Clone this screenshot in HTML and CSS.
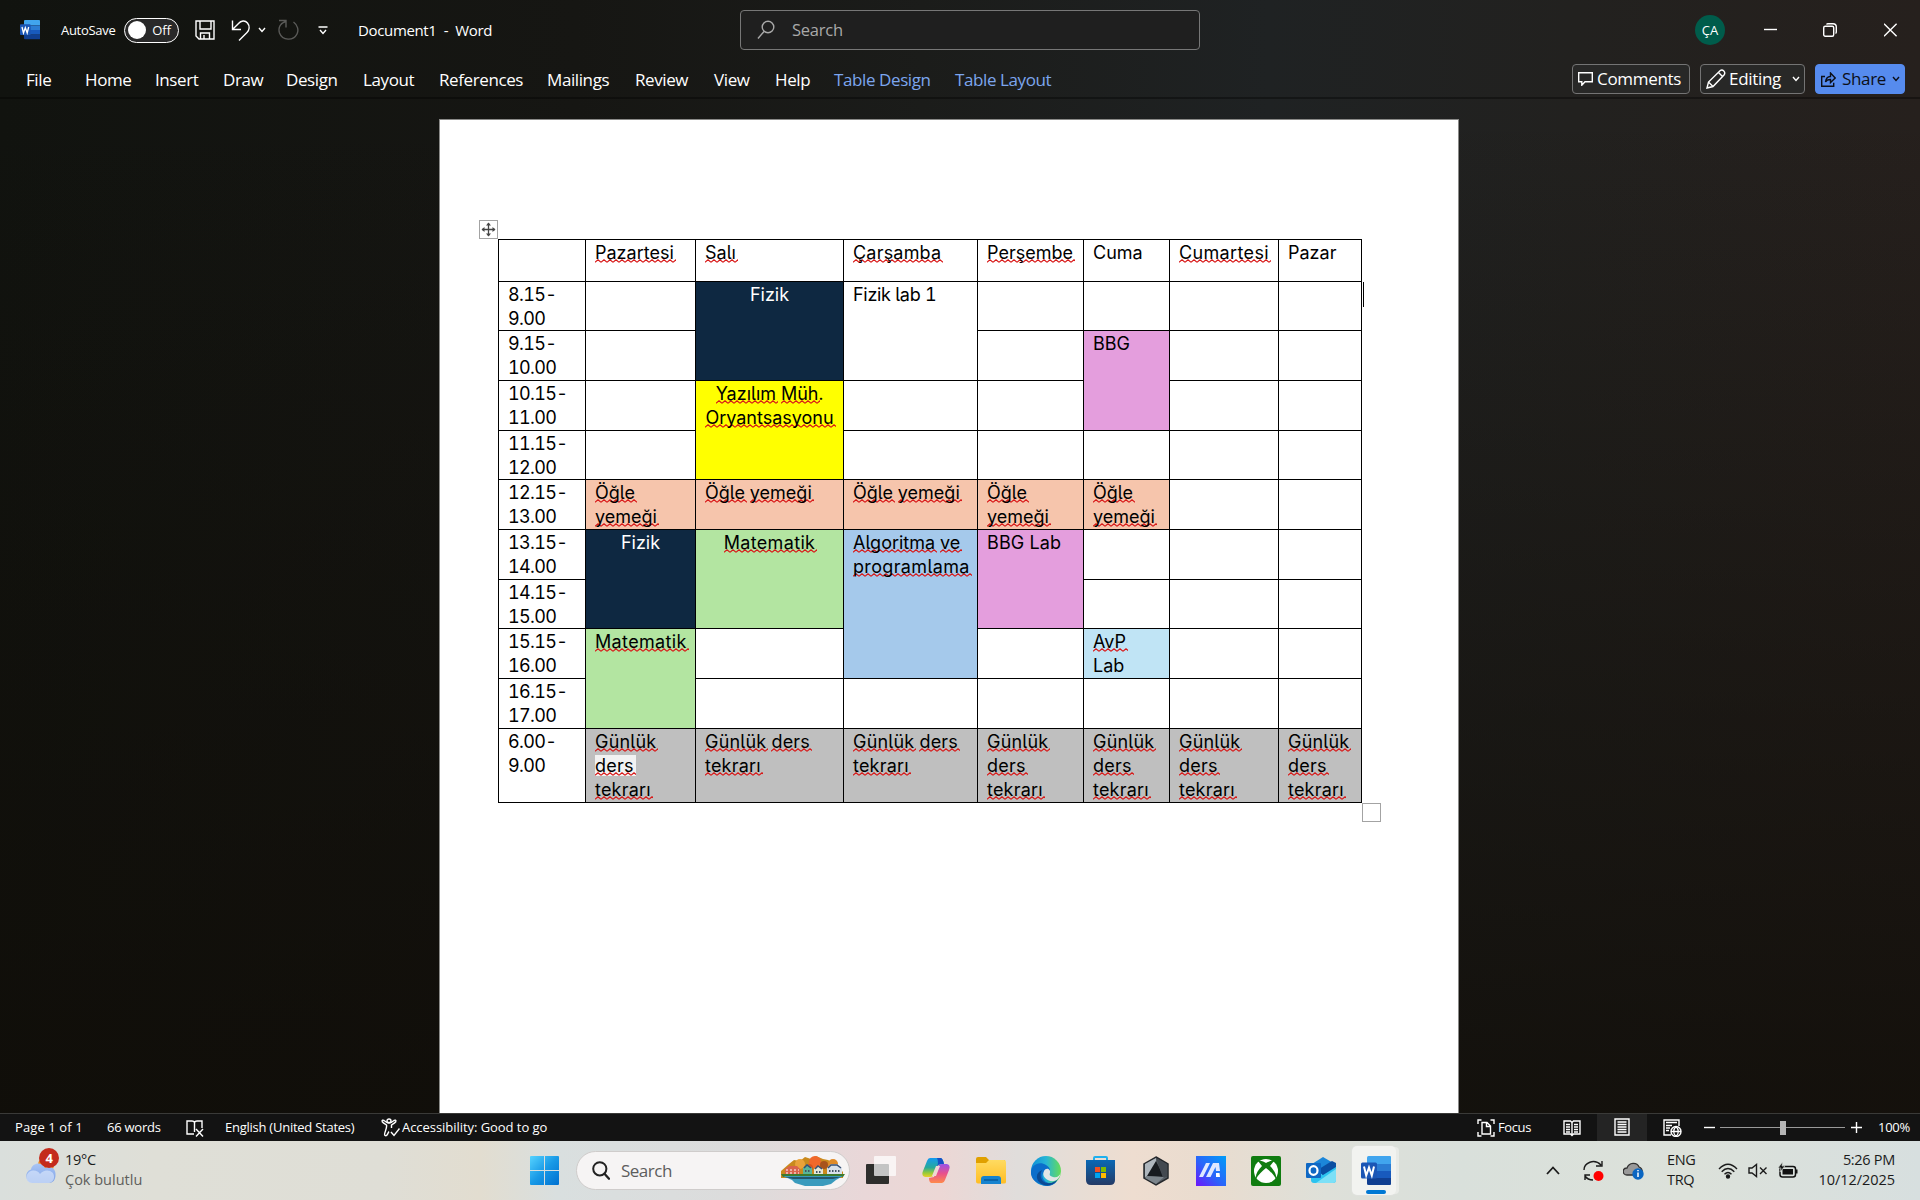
FILE: index.html
```html
<!DOCTYPE html>
<html lang="en">
<head>
<meta charset="utf-8">
<title>Document1 - Word</title>
<link rel="stylesheet" href="styles.css">
</head>
<body>
<div class="window">
  <header class="ribbon">
    <div class="titlebar">
      <svg width="20" height="20" viewBox="0 0 30 30"><use href="#word"/></svg>
      <span class="autosave">AutoSave</span>
      <span class="toggle"><i></i>Off</span>
      <svg width="20" height="20" viewBox="0 0 20 20" class="line"><path d="M1 1h18v18H4l-3-3zM5 1v8h11V1M5.500 19v-6h9v6M9 15v4"/></svg>
      <svg width="20" height="22" viewBox="0 0 20 22" class="line"><path d="M1.500 1.500v9H10M2 10L7.500 4.500C10 1.500 14 1 16.500 4c2.500 3 2 7-.5 9.500L8 21.500"/></svg>
      <svg width="8" height="6" viewBox="0 0 8 6" class="line"><path d="M1 1l3 3.500L7 1"/></svg>
      <svg width="22" height="22" viewBox="0 0 22 22" class="line dim"><path d="M1 1.500h7v7M7.500 2.500C2 4.500 0 9 1.500 14c3 8 14 8 17.500 1 2-4 .5-9-3.500-12"/></svg>
      <svg width="10" height="9" viewBox="0 0 10 9" class="line"><path d="M.5 1h9M2 4l3 3.500L8 4"/></svg>
      <span class="doc-name">Document1&nbsp; -&nbsp; Word</span>
      <div class="search"><svg width="18" height="20" viewBox="0 0 18 20" class="line"><circle cx="11" cy="7" r="5.800"/><path d="M7 11.500L1 18.500"/></svg><span>Search</span></div>
      <span class="avatar">ÇA</span>
      <svg width="14" height="14" viewBox="0 0 14 14" class="line"><path d="M0 6.500h13"/></svg>
      <svg width="14" height="14" viewBox="0 0 14 14" class="line"><rect x=".7" y="3.200" width="10" height="10" rx="1.500"/><path d="M3.500 1.500Q4 .7 5 .7h5q3.300 0 3.300 3.300v5q0 1-.8 1.500"/></svg>
      <svg width="14" height="14" viewBox="0 0 14 14" class="line"><path d="M0 .7l12.600 12.600M12.600.7L0 13.300"/></svg>
    </div>
    <div class="tabrow">
      <nav class="tabs">
        <span>File</span><span>Home</span><span>Insert</span><span>Draw</span><span>Design</span><span>Layout</span><span>References</span><span>Mailings</span><span>Review</span><span>View</span><span>Help</span><span class="ctx">Table Design</span><span class="ctx">Table Layout</span>
      </nav>
      <div class="actions">
        <button class="btn comments"><svg width="15" height="14" viewBox="0 0 15 14" class="line"><path d="M.7.7h13.600v9H7l-3.200 3.500V9.700H.7z"/></svg><span>Comments</span></button>
        <button class="btn editing"><svg width="20" height="20" viewBox="0 0 20 20" class="line"><path d="M1 19l1.500-6L14 1.700q2-1.400 3.800.3T18 6L7 17.500zM12.500 3.500l4 4M2.500 13l4.500 4.500"/></svg><span>Editing</span><svg width="8" height="6" viewBox="0 0 8 6" class="line"><path d="M1 1l3 3.500L7 1"/></svg></button>
        <button class="btn share"><svg width="15" height="15" viewBox="0 0 15 15" class="line"><path d="M4 4.500H.7v9.800h12v-3.500M4.500 10c.5-4 2.500-5.500 5-5.500V1l4.700 5-4.700 4.500V7.500C7 7.500 5.500 8 4.500 10z"/></svg><span>Share</span><svg width="8" height="6" viewBox="0 0 8 6" class="line"><path d="M1 1l3 3.500L7 1"/></svg></button>
      </div>
    </div>
  </header>

  <main class="canvas">
    <article class="page">
      <div class="table-wrap">
        <span class="move-handle"><svg width="15" height="15" viewBox="0 0 15 15"><path d="M7.500 1v13M1 7.500h13" stroke="#444" stroke-width="1.300"/><path d="M5 3.500L7.500.5 10 3.500zM5 11.500l2.500 3 2.500-3zM3.500 5l-3 2.500 3 2.500zM11.500 5l3 2.500-3 2.500z" fill="#444"/></svg></span>
        <span class="caret"></span>
        <span class="size-handle"></span>
        <table class="plan">
          <colgroup><col class="c1"><col class="c2"><col class="c3"><col class="c4"><col class="c5"><col class="c6"><col class="c7"><col class="c8"></colgroup>
          <tr class="h42"><td></td><td><u>Pazartesi</u></td><td><u>Salı</u></td><td><u class="roomy">Çarşamba</u></td><td><u>Perşembe</u></td><td>Cuma</td><td><u class="wide">Cumartesi</u></td><td>Pazar</td></tr>
          <tr class="h49"><td>8.15-<br>9.00</td><td></td><td rowspan="2" class="navy">Fizik</td><td rowspan="2" class="lab">Fizik lab 1</td><td></td><td></td><td></td><td></td></tr>
          <tr class="h50"><td>9.15-<br>10.00</td><td></td><td></td><td rowspan="2" class="pink">BBG</td><td></td><td></td></tr>
          <tr class="h50"><td>10.15-<br>11.00</td><td></td><td rowspan="2" class="yellow"><u>Yazılım</u> <u>Müh</u>.<br><u>Oryantsasyonu</u></td><td></td><td></td><td></td><td></td></tr>
          <tr class="h49"><td>11.15-<br>12.00</td><td></td><td></td><td></td><td></td><td></td><td></td></tr>
          <tr class="h50"><td>12.15-<br>13.00</td><td class="peach"><u>Öğle</u><br><u>yemeği</u></td><td class="peach"><u>Öğle</u> <u>yemeği</u></td><td class="peach"><u>Öğle</u> <u>yemeği</u></td><td class="peach"><u>Öğle</u><br><u>yemeği</u></td><td class="peach"><u>Öğle</u><br><u>yemeği</u></td><td></td><td></td></tr>
          <tr class="h50"><td>13.15-<br>14.00</td><td rowspan="2" class="navy">Fizik</td><td rowspan="2" class="green mid"><u class="wide">Matematik</u></td><td rowspan="3" class="blue"><u>Algoritma</u> <u>ve</u><br><u class="wide">programlama</u></td><td rowspan="2" class="pink bbg-lab">BBG Lab</td><td></td><td></td><td></td></tr>
          <tr class="h49"><td>14.15-<br>15.00</td><td></td><td></td><td></td></tr>
          <tr class="h50"><td>15.15-<br>16.00</td><td rowspan="2" class="green"><u class="wide">Matematik</u></td><td></td><td></td><td class="sky"><u>AvP</u><br>Lab</td><td></td><td></td></tr>
          <tr class="h50"><td>16.15-<br>17.00</td><td></td><td></td><td></td><td></td><td></td><td></td></tr>
          <tr class="h74"><td>6.00-<br>9.00</td><td class="gray"><u>Günlük</u><br><u class="picked">ders</u><br><u>tekrarı</u></td><td class="gray"><u>Günlük</u> <u>ders</u><br><u>tekrarı</u></td><td class="gray"><u>Günlük</u> <u>ders</u><br><u>tekrarı</u></td><td class="gray"><u>Günlük</u><br><u>ders</u><br><u>tekrarı</u></td><td class="gray"><u>Günlük</u><br><u>ders</u><br><u>tekrarı</u></td><td class="gray"><u>Günlük</u><br><u>ders</u><br><u>tekrarı</u></td><td class="gray"><u>Günlük</u><br><u>ders</u><br><u>tekrarı</u></td></tr>
        </table>
      </div>
    </article>
  </main>

  <footer class="status">
    <span class="pages">Page 1 of 1</span>
    <span>66 words</span>
    <svg width="18" height="18" viewBox="0 0 18 18" class="line"><path d="M8 15H1V2h5q2 0 2.500 1.500Q9 2 11 2h5v7M8.500 3.500V13M10 10l7 7.500M17 10l-7 7.500"/></svg>
    <span>English (United States)</span>
    <svg width="19" height="19" viewBox="0 0 19 19" class="line"><circle cx="8" cy="3" r="2"/><path d="M1 3.500c2 2.500 4 2.500 4.500 3.500 1 4-3.500 9-1.500 10.500s3-3 4-4M15 3.500c-2 2.500-4 2.500-4.500 3.500v3M1 3.500q0-2 2-1l3 2h4l3-2q2-1 2 1M10 14l3 3.500 5.500-7"/></svg>
    <span class="access">Accessibility: Good to go</span>
    <svg width="18" height="18" viewBox="0 0 18 18" class="line"><path d="M4.500 1H1v4M13.500 1H17v4M4.500 17H1v-4M13.500 17H17v-4M5 3.500h5l3.500 3.500v8H5zM9.500 3.500v4h4"/></svg>
    <span class="focus">Focus</span>
    <svg width="18" height="18" viewBox="0 0 18 18" class="line"><path d="M1 2h6.500L9 3.500 10.500 2H17v13h-6.500L9 16.500 7.500 15H1zM9 3.500v13M3 5.500h4M3 8h4M3 10.500h4M3 13h4M11 5.500h4M11 8h4M11 10.500h4M11 13h4"/></svg>
    <span class="view-on"><svg width="16" height="18" viewBox="0 0 16 18" class="line"><path d="M1 1h14v16H1zM3.500 4h9M3.500 6.500h9M3.500 9h9M3.500 11.500h9M3.500 14h9"/></svg></span>
    <svg width="19" height="18" viewBox="0 0 19 18" class="line"><path d="M8 16H1V1h15v6M3 3.500h11M3 6.500h6M3 9h4M3 11.500h3"/><circle cx="13" cy="12.500" r="5" fill="#111"/><path d="M8 12.500h10M13 7.500c-3 3-3 7 0 10 3-3 3-7 0-10"/></svg>
    <svg width="11" height="11" viewBox="0 0 11 11" class="line"><path d="M0 5.500h11"/></svg>
    <span class="slider"><i></i></span>
    <svg width="11" height="11" viewBox="0 0 11 11" class="line"><path d="M0 5.500h11M5.500 0v11"/></svg>
    <span>100%</span>
  </footer>
</div>

<div class="taskbar">
  <div class="weather"><svg width="31" height="38" viewBox="0 0 31 38">
    <circle cx="21" cy="20" r="8" fill="#f08a1c"/>
    <path d="M7 38a7 7 0 0 1-1-13.500C7 18 17 16 20 23c6-3 11 1 10.500 7 0 5-2.500 8-7 8z" fill="url(#cloud)"/>
    <path d="M4 27c5-3 9-1 11 2 3-4 9-5 13-1 3 6-1 10-5 10H7c-5 0-8-6-3-11z" fill="#dbe8fc" opacity=".65"/></svg><b class="badge">4</b></div>
  <div class="temp"><span>19°C</span><span class="soft">Çok bulutlu</span></div>
  <svg width="29" height="29" viewBox="0 0 29 29"><path d="M0 1q0-1 1-1h13v14H0zM15 0h13q1 0 1 1v13H15zM0 15h14v14H1q-1 0-1-1zM15 15h14v13q0 1-1 1H15z" fill="url(#win)"/></svg>
  <div class="pill"><svg width="18" height="19" viewBox="0 0 18 19"><circle cx="7.800" cy="7.800" r="6.600" fill="none" stroke="#222" stroke-width="2"/><path d="M12.500 12.700l4.500 5" stroke="#222" stroke-width="2.300" stroke-linecap="round"/></svg><span>Search</span>
    <svg class="village" width="64" height="30" viewBox="0 0 64 30">
      <path d="M0 15L8 8l5-4 6 1 5-4 6 2 5-3 7 3 5 1 7 4 8 8v6H0z" fill="#c98a1d"/>
      <circle cx="34" cy="6" r="6" fill="#f0682c"/><circle cx="19" cy="8" r="5" fill="#e9a23a"/><circle cx="52" cy="8" r="5" fill="#e08b28"/><circle cx="28" cy="12" r="4" fill="#d9541e"/><circle cx="43" cy="9" r="4" fill="#a8531c"/>
      <path d="M4 19v-6l4-3h8l3 3v6z" fill="#d9634c"/><path d="M5 14h13M5 17h13" stroke="#fff" stroke-dasharray="2 2"/>
      <path d="M22 19v-7l4-4 5 4v7z" fill="#59b59a"/><path d="M33 19v-6l4-3 5 3v6z" fill="#e4e6d8"/><path d="M46 19v-7l4-4h6l5 4v7z" fill="#d9e1ea"/>
      <path d="M23 12l3-3 4 3M34 13l3-3 4 3M47 12l3-3h6l4 3" fill="none" stroke="#374f72" stroke-width="1.500"/>
      <path d="M24 15h5M35 16h5M48 15h12" stroke="#456" stroke-width="2" stroke-dasharray="1.500 1.500"/>
      <path d="M0 18h64l-2 3H2z" fill="#3d7a2e"/><path d="M2 20h60l-7 4-5 4-8 2H24l-10-3-3-3z" fill="#3a9bbd"/><path d="M4 21h56l-8 2H12z" fill="#24566e"/>
    </svg></div>
  <svg width="30" height="29" viewBox="0 0 30 29"><rect y="8" width="23" height="20" rx="1" fill="#2e2e2c"/><rect x="8" y="0" width="22" height="20" rx="1" fill="#fff" opacity=".72"/></svg>
  <svg width="28" height="27" viewBox="0 0 28 27">
    <path d="M8 1h11q2 1 3 6l-6 1-4 10q-1 2-4 2H3q-4-1-2-6L5 4q1-3 3-3z" fill="url(#cpA)"/>
    <path d="M20 26H9q-2-1-2-5l5-1 4-11q1-2 4-2h5q4 1 2 6l-4 10q-1 3-3 3z" fill="url(#cpB)"/>
    <path d="M16 1h3q2 1 3 6h-3q-3 0-4 3l1-4q0-3-1-5z" fill="#1650c4"/><path d="M14 9h4l-4 10h-4z" fill="#eed8d2"/></svg>
  <svg width="30" height="27" viewBox="0 0 30 27"><path d="M0 2q0-2 2-2h8l3 3h16v8H0z" fill="#e0a000"/><path d="M0 6h10l3-3h15q2 0 2 2v20q0 1.500-2 1.500H2q-2 0-2-2z" fill="url(#fold)"/><path d="M5 27v-5q0-3 3-3h14q3 0 3 3v5z" fill="#1683cf"/><path d="M8 23h14" stroke="#075a9c" stroke-width="1.500"/></svg>
  <svg width="30" height="30" viewBox="0 0 30 30"><circle cx="15" cy="15" r="15" fill="url(#edgeA)"/><path d="M0 17C0 8 9 5 15 9c4 2 5 6 3 9-5-5-9 1-5 6 3 4 8 4 13 1-4 6-12 6-17 3-5-2-9-6-9-11z" fill="#0b6ecb"/><path d="M11 14c-3 5-1 12 5 13q6 1 11-4c-5 8-14 8-19 3-4-5-2-10 3-12z" fill="#0a4a94"/><path d="M13 15c2-4 7-2 6 2-1 2 0 3 3 4 4 1 7-1 8-5-1 5-3 8-7 9-6 1-13-4-10-10z" fill="#e2e5e6"/></svg>
  <svg width="29" height="29" viewBox="0 0 29 29"><path d="M8 6V2q0-1 1-1h11q1 0 1 1v4" fill="none" stroke="#1fb0ee" stroke-width="2"/><path d="M0 4h29v20q0 5-5 5H5q-5 0-5-5z" fill="url(#store)"/><path d="M9 11h5v5H9z" fill="#f25022"/><path d="M15 11h5v5h-5z" fill="#7fba00"/><path d="M9 17h5v5H9z" fill="#00a4ef"/><path d="M15 17h5v5h-5z" fill="#ffb900"/></svg>
  <svg width="28" height="30" viewBox="0 0 28 30"><path d="M14 1l12 7v14l-12 7-12-7V8z" fill="#596067" stroke="#25282c" stroke-width="1.500"/><path d="M14 2v5L6 20l-3 1V8z" fill="#aeb6bd"/><path d="M14 5l8 16-17-1z" fill="#171b20"/><path d="M14 2l11 6v13l-4 1z" fill="#434950"/><path d="M5 20l17 1-8 7-11-6z" fill="#7c858c"/></svg>
  <svg width="30" height="30" viewBox="0 0 30 30"><path d="M0 0h30v30H0z" fill="url(#asus)"/><path d="M3 21L10 7h4L7 21zM10 21l7-14h6l1 8h-4l-.5-4-5 10z" fill="#dfe8ff"/><path d="M20 17h3.500l.5 4h-4z" fill="#fff"/></svg>
  <svg width="30" height="30" viewBox="0 0 30 30"><rect width="30" height="30" rx="2" fill="#107c10"/><circle cx="15" cy="15" r="12" fill="#fff"/><path d="M7 5c3-1 6 1 8 2 2-1 5-3 8-2l-4 5c4 4 7 9 6 13-2-4-6-8-10-11C11 15 7 19 5 23c-1-4 2-9 6-13z" fill="#107c10"/></svg>
  <svg width="30" height="27" viewBox="0 0 30 27"><path d="M6 7L17 0l12 7v4L17 18 6 12z" fill="#1b86d9"/><path d="M13 12L26 4l4 2v5l-13 9z" fill="#0a4ea2"/><path d="M5 12l12 6 13-8v13q0 3-3 3H8q-3 0-3-3z" fill="#2cc3ef"/><path d="M10 26L30 12v11q0 3-3 3z" fill="#7ce0f7"/><rect y="6" width="15" height="15" rx="1" fill="#0f68c4"/><ellipse cx="7.500" cy="13.500" rx="4" ry="4.300" fill="none" stroke="#fff" stroke-width="2.200"/></svg>
  <div class="running"><svg width="30" height="30" viewBox="0 0 30 30"><use href="#word"/></svg><i></i></div>
  <svg width="14" height="9" viewBox="0 0 14 9" class="ink"><path d="M1 8l6-6.500L13 8"/></svg>
  <svg width="21" height="22" viewBox="0 0 21 22" class="ink thin"><path d="M1 10C1 3 11-2 18 5M19 1v5h-6M2 20v-5h5M2 16c2 3 4 4 8 4"/><circle cx="15.500" cy="16" r="5" fill="red" stroke="none"/></svg>
  <svg width="21" height="18" viewBox="0 0 21 18"><path d="M4 13c-5 0-5-7 0-7 2-6 10-6 12-1 3 1 4 3 3 8z" fill="#999" stroke="#333" stroke-width="1.300"/><circle cx="15" cy="12" r="5.700" fill="#0a66c2"/><path d="M15 10.500V15M15 8v1.300" stroke="#fff" stroke-width="1.500"/></svg>
  <div class="lang"><span>ENG</span><span>TRQ</span></div>
  <svg width="20" height="16" viewBox="0 0 20 16" class="ink thin"><path d="M1 6q9-9.500 18 0M3.700 8.700q6.300-6.500 12.600 0M6.500 11.300q3.500-3.500 7 0"/><circle cx="10" cy="13.500" r="1.500" fill="#111"/></svg>
  <svg width="20" height="15" viewBox="0 0 20 15" class="ink thin"><path d="M1 5v5h3l4.500 3.500v-12L4 5zM12 4.500l6.500 6.500M18.500 4.500L12 11"/></svg>
  <svg width="20" height="17" viewBox="0 0 20 17"><rect x="2" y="4.500" width="15.500" height="10.500" rx="2.500" fill="none" stroke="#111" stroke-width="1.500"/><rect x="4.500" y="7" width="10.500" height="5.500" fill="#111"/><path d="M18 7.500h1.500v4H18z" fill="#111"/><path d="M4.500 0L0 6h3l-1 4 5-6H4z" fill="#111" stroke="#dce2db" stroke-width=".6"/></svg>
  <div class="clock"><span>5:26 PM</span><span class="date">10/12/2025</span></div>
</div>

<svg width="0" height="0" class="defs">
  <defs>
    <linearGradient id="win" x2="1" y2="1"><stop stop-color="#56d3ff"/><stop offset=".5" stop-color="#1899e6"/><stop offset="1" stop-color="#0070d0"/></linearGradient>
    <linearGradient id="cloud" y2="1" x2="0"><stop stop-color="#a9c5f5"/><stop offset="1" stop-color="#7fa2e6"/></linearGradient>
    <linearGradient id="cpA" x2="0" y2="1"><stop stop-color="#1499f0"/><stop offset=".5" stop-color="#27a99a"/><stop offset=".8" stop-color="#9ccb36"/><stop offset="1" stop-color="#e9cf2a"/></linearGradient>
    <linearGradient id="cpB" x2="0" y2="1"><stop stop-color="#9a53e8"/><stop offset=".5" stop-color="#e8518c"/><stop offset="1" stop-color="#ff8a4a"/></linearGradient>
    <linearGradient id="fold" x2="0" y2="1"><stop stop-color="#ffdb61"/><stop offset="1" stop-color="#ffbd24"/></linearGradient>
    <linearGradient id="edgeA"><stop stop-color="#0f8fd8"/><stop offset=".5" stop-color="#27b5d6"/><stop offset="1" stop-color="#66dc58"/></linearGradient>
    <linearGradient id="store" x2="0" y2="1"><stop stop-color="#0a68b5"/><stop offset="1" stop-color="#243a66"/></linearGradient>
    <linearGradient id="asus" x1="1" x2="0" y2="1"><stop stop-color="#009df8"/><stop offset=".55" stop-color="#2b63fa"/><stop offset="1" stop-color="#6d14fb"/></linearGradient>
    <g id="word"><path d="M6 1.500Q6 0 7.500 0H29q1 0 1 1v7H6z" fill="#41a5ee"/><path d="M6 8h24v7H6z" fill="#2b7cd3"/><path d="M6 15h24v7H6z" fill="#185abd"/><path d="M6 22h24v6q0 1-1 1H7.500Q6 29 6 27.500z" fill="#103f91"/><rect y="6.500" width="16" height="16" rx="1.500" fill="#1b56b5"/><path d="M3 10.500l2.200 9L8 11.500l2.800 8 2.200-9" fill="none" stroke="#fff" stroke-width="2"/></g>
  </defs>
</svg>
</body>
</html>
```
FILE: styles.css
```css
* { box-sizing: border-box; }
body {
  margin: 0;
  width: 1920px;
  height: 1200px;
  overflow: hidden;
  display: flex;
  flex-direction: column;
  font-family: "Open Sans", "Noto Sans", sans-serif;
  color: #fff;
}
svg { display: block; flex: none; }
.defs { position: absolute; }
.line { fill: none; stroke: currentColor; stroke-width: 1.4; }
.dim { color: #5b5b59; }
.ink { fill: none; stroke: #1b1b1b; stroke-width: 1.8; }
.ink.thin { stroke-width: 1.4; }

.window {
  height: 1141px;
  display: flex;
  flex-direction: column;
  background:
    linear-gradient(180deg, rgba(16, 13, 8, 0) 10%, rgba(16, 13, 8, .8) 95%),
    linear-gradient(90deg, #11130f 0%, #161613 30%, #1b1c1a 48%, #1f2223 66%, #22211f 82%, #26201d 100%);
}

.ribbon { height: 99px; border-bottom: 2px solid rgba(0, 0, 0, .35); }
.titlebar {
  height: 60px;
  padding-left: 20px;
  display: grid;
  grid-template-columns: 41px 63px 71px 36px 27px 20px 40px 40px 382px 955px 69px 59px 61px 36px;
  align-items: center;
  white-space: nowrap;
}
.autosave { font-size: 13px; letter-spacing: -.3px; }
.toggle {
  width: 55px;
  height: 25px;
  padding: 0 7px 0 3px;
  display: flex;
  align-items: center;
  justify-content: space-between;
  border: 1.5px solid #fff;
  border-radius: 13px;
  background: #292929;
  font-size: 13px;
}
.toggle i { width: 18px; height: 18px; border-radius: 50%; background: #fff; }
.doc-name { font-size: 15px; letter-spacing: -.35px; }
.search {
  width: 460px;
  height: 40px;
  padding-left: 16px;
  display: flex;
  align-items: center;
  gap: 17px;
  border: 1px solid #777;
  border-radius: 4px;
  background: #1f1f1f;
  color: #a9a9a9;
  font-size: 16.5px;
  letter-spacing: -.25px;
}
.search span { padding-bottom: 2px; }
.avatar {
  width: 30px;
  height: 30px;
  border-radius: 50%;
  background: #005c4b;
  text-align: center;
  font-size: 13px;
  line-height: 30px;
}

.tabrow { height: 38px; padding-left: 26px; display: flex; }
.tabs {
  width: 1546px;
  display: grid;
  grid-template-columns: 59px 70px 68px 63px 77px 76px 108px 88px 79px 61px 59px 121px 110px;
  font-size: 17px;
  letter-spacing: -.4px;
  line-height: 40px;
  white-space: nowrap;
}
.ctx { color: #7ca6ee; }
.actions { display: flex; align-items: flex-start; padding-top: 4px; }
.btn {
  height: 30px;
  display: flex;
  align-items: center;
  border: 1px solid #747474;
  border-radius: 4px;
  background: #282827;
  color: #fff;
  font: 17px "Open Sans", sans-serif;
  letter-spacing: -.3px;
}
.btn span { padding-bottom: 1px; }
.comments { width: 118px; margin-right: 10px; padding: 0 5px; gap: 4px; }
.editing { width: 105px; margin-right: 10px; padding: 0 4px 0 5px; gap: 3px; }
.editing svg:last-child { margin-left: auto; }
.share { width: 90px; padding: 0 4px 0 5px; justify-content: space-between; border-color: #568bee; background: #568bee; color: #0c0f18; }

.canvas { height: 1014px; padding: 20px 0 0 439px; overflow: hidden; }
.page {
  width: 1020px;
  height: 1100px;
  padding: 119px 0 0 58px;
  background: #fff;
  border: 1px solid #8a8a88;
}
.table-wrap { position: relative; width: 864px; color: #000; }
.move-handle, .size-handle {
  position: absolute;
  width: 19px;
  height: 19px;
  padding: 1px;
  border: 1px solid #a3a3a3;
  background: #fff;
}
.move-handle { left: -19px; top: -19px; }
.size-handle { left: 864px; top: 564px; }
.caret { position: absolute; left: 865px; top: 43px; width: 1px; height: 25px; background: #000; }
.plan {
  width: 864px;
  table-layout: fixed;
  border-collapse: separate;
  border-spacing: 0;
  border: solid #000;
  border-width: 1px 0 0 1px;
  font: 18px/23.5px Inter, Roboto, sans-serif;
  font-feature-settings: "cv05", "tnum";
  letter-spacing: 0;
}
.plan td {
  padding: 1px 0 0 9px;
  border: solid #000;
  border-width: 0 1px 1px 0;
  vertical-align: top;
  white-space: nowrap;
}
.plan td:first-child { letter-spacing: -.65px; }
.plan .lab { letter-spacing: -.3px; }
.c1 { width: 87px; } .c2 { width: 110px; } .c3 { width: 148px; } .c4 { width: 134px; }
.c5 { width: 106px; } .c6 { width: 86px; } .c7 { width: 109px; } .c8 { width: 83px; }
.h42 { height: 42px; } .h49 { height: 49px; } .h50 { height: 50px; }
.h74 { height: 74px; line-height: 24px; }
.plan u {
  text-decoration: none;
  margin-right: -2px;
  padding-right: 2px;
  background: url("data:image/svg+xml,%3Csvg xmlns='http://www.w3.org/2000/svg' width='6' height='4'%3E%3Cpath d='M0 3.200L3 .8 6 3.200' fill='none' stroke='%23d81818' stroke-width='1.100'/%3E%3C/svg%3E") repeat-x left bottom;
}
.plan .roomy { letter-spacing: .2px; }
.plan .wide { letter-spacing: .35px; }
.plan .picked { background-color: #f2f2f2; }
.plan .navy { background: #0e2841; color: #fff; }
.plan .navy, .plan .yellow, .plan .mid { padding: 1px 0 0; text-align: center; }
.yellow { background: #ff0; }
.pink { background: #e49edd; }
.bbg-lab { letter-spacing: .15px; }
.peach { background: #f6c5ac; }
.green { background: #b3e5a1; }
.blue { background: #a5c9eb; }
.sky { background: #c0e4f5; }
.gray { background: #bfbfbf; letter-spacing: .2px; }

.status {
  height: 28px;
  padding: 0 0 1px 15px;
  display: grid;
  grid-template-columns: 92px 79px 39px 156px 21px 1075px 21px 65px 34px 66px 41px 16px 131px 27px 34px;
  align-items: center;
  border-top: 1px solid #3a3a38;
  background: #131313;
  font-size: 13px;
  letter-spacing: -.25px;
  white-space: nowrap;
}
.status > span { padding-bottom: 1px; }
.pages { letter-spacing: .1px; }
.access { letter-spacing: -.05px; }
.focus { letter-spacing: -.4px; }
.view-on { width: 50px; height: 27px; display: flex; align-items: center; justify-content: center; background: #242424; }
.slider { width: 125px; height: 14px; display: flex; justify-content: center; background: linear-gradient(#999, #999) 0 50% / 100% 1px no-repeat; }
.status > .slider { padding: 0; }
.slider i { width: 6px; background: #b5b5b5; }

.taskbar {
  height: 59px;
  padding-left: 25px;
  display: grid;
  grid-template-columns: 40px 465px 46px 290px 56px 54px 55px 55px 56px 54px 55px 55px 46px 194px 37px 40px 44px 51px 30px 30px 32px 85px;
  align-items: center;
  background: linear-gradient(90deg, #dadfdc 0%, #dfdfd7 8%, #dfded6 20%, #e2ddd0 25%, #d9dfdf 29%, #dcdcdc 38%, #e9d7d8 45%, #ecd7d5 49%, #e0dddb 53%, #eeddd0 59%, #e9dccf 63%, #dee0d9 69%, #d9e0db 76%, #dce1da 88%, #d7dfdf 100%);
  color: #1b1b1b;
  font-size: 14.5px;
  line-height: 20px;
  letter-spacing: -.3px;
  white-space: nowrap;
}
.weather { position: relative; align-self: start; padding-top: 4px; }
.badge {
  position: absolute;
  left: 14px;
  top: 7px;
  width: 20px;
  height: 20px;
  border-radius: 50%;
  background: #c42b1c;
  color: #fff;
  text-align: center;
  font-size: 13px;
}
.temp, .lang, .clock { display: flex; flex-direction: column; padding-bottom: 2px; }
.clock { align-items: flex-end; }
.date { letter-spacing: -.05px; }
.soft { color: #5f605c; letter-spacing: 0; }
.pill {
  width: 274px;
  height: 39px;
  padding: 0 4px 0 15px;
  display: flex;
  align-items: center;
  border: 1px solid #cfcccb;
  border-radius: 20px;
  background: #f6f4f4;
  color: #5d5d5d;
  font-size: 17px;
  letter-spacing: -.5px;
}
.pill span { margin-left: 11px; }
.village { margin-left: auto; }
.running {
  width: 44px;
  height: 49px;
  padding: 10px 0 0 9px;
  border-radius: 5px;
  background: #f2f3f0;
  box-shadow: 4px 0 0 -1px #e9ebe7, 0 0 0 1px #dfe1dd;
}
.running i { display: block; width: 20px; height: 4px; margin: 4px 0 0 5px; border-radius: 2px; background: #0078d4; }
```
